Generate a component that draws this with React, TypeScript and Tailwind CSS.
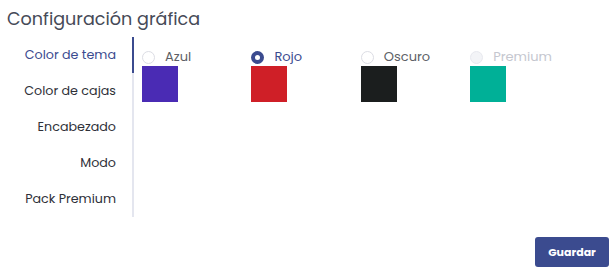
import React from "react";

const tabs = ["Color de tema", "Color de cajas", "Encabezado", "Modo", "Pack Premium"];
const opts = [
  { label: "Azul", color: "bg-[#4a2bb4]", checked: false, disabled: false },
  { label: "Rojo", color: "bg-[#cf1f27]", checked: true, disabled: false },
  { label: "Oscuro", color: "bg-[#1b1e1e]", checked: false, disabled: false },
  { label: "Premium", color: "bg-[#00b097]", checked: false, disabled: true },
];

export default function App() {
  return (
    <div className="w-[616px] h-[273px] bg-white flex flex-col font-['Poppins','Inter',sans-serif]">
      <div className="pl-[7px] pt-[6px] h-[37px] text-[17.6px] leading-[26px] text-[#464a57]">
        Configuración gráfica
      </div>
      <div className="flex">
        <div className="w-[134px] flex">
          <div className="flex-1 flex flex-col">
            {tabs.map((t, i) => (
              <div
                key={t}
                className={`h-[36px] flex items-center justify-end pr-[16px] text-[12.7px] ${
                  i === 0 ? "text-[#3b4b8f]" : "text-[#2e3038]"
                }`}
              >
                {t}
              </div>
            ))}
          </div>
          <div className="w-[2px] flex flex-col">
            <div className="h-[36px] bg-[#3b4b8f]" />
            <div className="flex-1 bg-[#e4e6ef]" />
          </div>
        </div>
        <div className="pl-[8px] pt-[13px] flex">
          {opts.map((o) => (
            <div key={o.label} className="w-[109.4px] flex flex-col">
              <div className="flex items-center h-[14px] gap-[10px]">
                {o.checked ? (
                  <div className="w-[13px] h-[13px] rounded-full bg-[#3b4b8f] flex items-center justify-center">
                    <div className="w-[5px] h-[5px] rounded-full bg-white" />
                  </div>
                ) : (
                  <div
                    className={`w-[13px] h-[13px] rounded-full border ${
                      o.disabled ? "border-[#e8e9ef] bg-[#f3f4f7]" : "border-[#dcdde4] bg-white"
                    }`}
                  />
                )}
                <span
                  className={`text-[13px] ${
                    o.disabled ? "text-[#c5c7cf]" : o.checked ? "text-[#3b4b8f]" : "text-[#5d5f66]"
                  }`}
                >
                  {o.label}
                </span>
              </div>
              <div className={`mt-[2px] w-[36px] h-[36px] ${o.color}`} />
            </div>
          ))}
        </div>
      </div>
      <div className="flex-1 flex items-end justify-end pr-[7px] pb-[6px]">
        <button className="w-[74px] h-[30px] rounded-[3px] bg-[#3b4b8f] text-white text-[11px] font-bold">
          Guardar
        </button>
      </div>
    </div>
  );
}
